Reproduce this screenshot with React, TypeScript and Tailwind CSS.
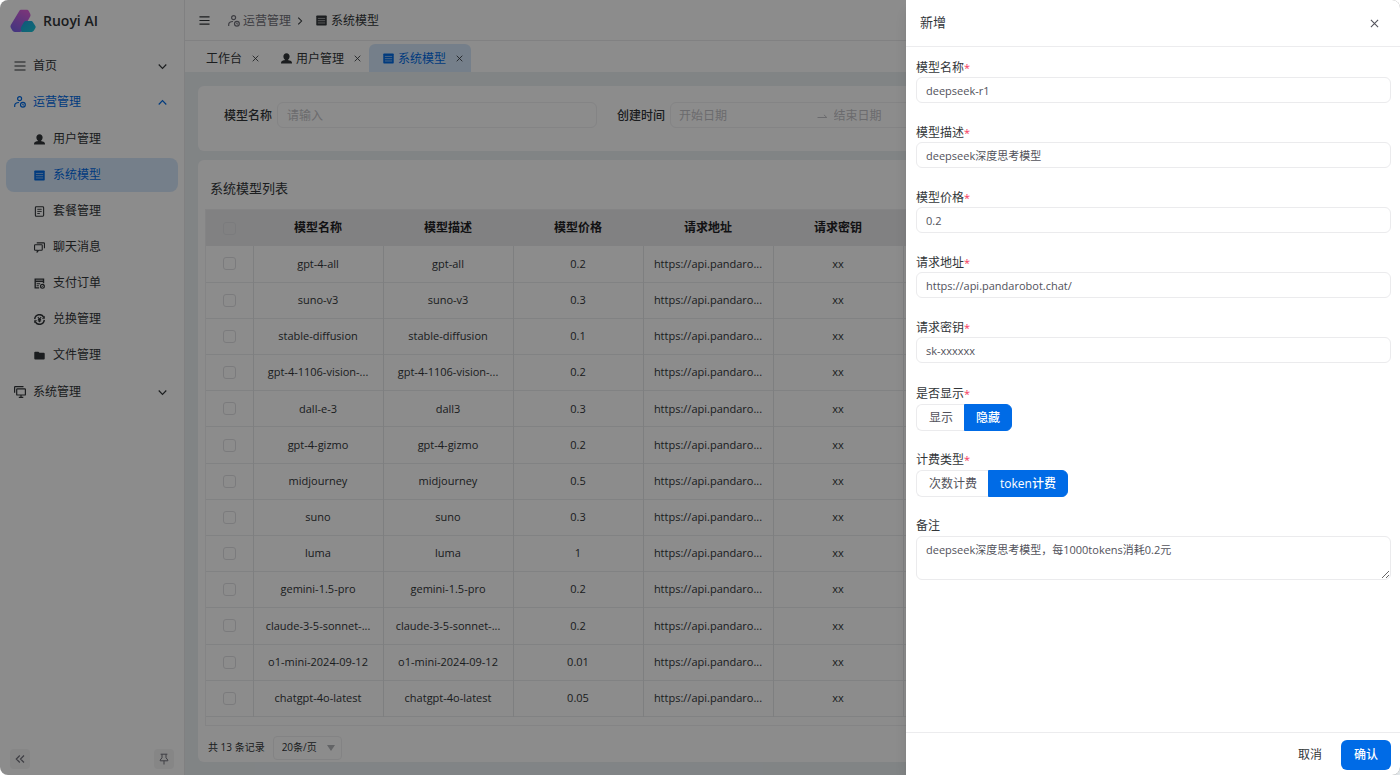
import { SVGProps, ReactNode, useState } from "react";
import clsx from "clsx";

type IconProps = SVGProps<SVGSVGElement>;

interface Model {
  name: string;
  desc: string;
  price: string;
}

const MODELS: Model[] = [
  { name: "gpt-4-all", desc: "gpt-all", price: "0.2" },
  { name: "suno-v3", desc: "suno-v3", price: "0.3" },
  { name: "stable-diffusion", desc: "stable-diffusion", price: "0.1" },
  { name: "gpt-4-1106-vision-...", desc: "gpt-4-1106-vision-...", price: "0.2" },
  { name: "dall-e-3", desc: "dall3", price: "0.3" },
  { name: "gpt-4-gizmo", desc: "gpt-4-gizmo", price: "0.2" },
  { name: "midjourney", desc: "midjourney", price: "0.5" },
  { name: "suno", desc: "suno", price: "0.3" },
  { name: "luma", desc: "luma", price: "1" },
  { name: "gemini-1.5-pro", desc: "gemini-1.5-pro", price: "0.2" },
  { name: "claude-3-5-sonnet-...", desc: "claude-3-5-sonnet-...", price: "0.2" },
  { name: "o1-mini-2024-09-12", desc: "o1-mini-2024-09-12", price: "0.01" },
  { name: "chatgpt-4o-latest", desc: "chatgpt-4o-latest", price: "0.05" },
];

const COLUMNS = ["模型名称", "模型描述", "模型价格", "请求地址", "请求密钥"];

export default function App() {
  return (
    <div className="relative flex h-screen overflow-hidden bg-white font-['Open_Sans','Noto_Sans_CJK_SC',sans-serif] text-xs text-[#323639]">
      <Sidebar />
      <div className="flex min-w-0 flex-1 flex-col border-l border-[#e9eaec]">
        <Header />
        <TabBar />
        <main className="flex min-h-0 flex-1 flex-col gap-[9px] bg-[#ebf0f3] p-[13px] pt-[14px]">
          <SearchForm />
          <ModelTable />
        </main>
      </div>
      {/* mask */}
      <div className="absolute inset-0 rounded-lg bg-black/45" />
      <ModelDrawer />
    </div>
  );
}

/* ---------- sidebar ---------- */

function Sidebar() {
  return (
    <aside className="flex w-[184px] shrink-0 flex-col">
      <div className="flex h-[41px] items-center gap-[7px] pl-[10px]">
        <Logo className="h-6 w-[26px]" />
        <span className="text-sm font-semibold">Ruoyi AI</span>
      </div>
      <nav className="flex flex-1 flex-col gap-[2px] px-[6px] pt-2">
        <MenuItem icon={<MenuIcon className="size-3" />} arrow="down">
          首页
        </MenuItem>
        <MenuItem icon={<UserTimeIcon className="size-3" />} arrow="up" tint>
          运营管理
        </MenuItem>
        <div className="my-px flex flex-col gap-[2px]">
          <SubItem icon={<UserIcon className="size-[11px]" />}>用户管理</SubItem>
          <SubItem icon={<TableIcon className="size-[11px]" />} active>
            系统模型
          </SubItem>
          <SubItem icon={<PackageIcon className="size-[11px]" />}>套餐管理</SubItem>
          <SubItem icon={<ChatIcon className="size-[11px]" />}>聊天消息</SubItem>
          <SubItem icon={<OrderIcon className="size-[11px]" />}>支付订单</SubItem>
          <SubItem icon={<ExchangeIcon className="size-[11px]" />}>兑换管理</SubItem>
          <SubItem icon={<FolderIcon className="size-[11px]" />}>文件管理</SubItem>
        </div>
        <MenuItem icon={<ScreensIcon className="size-3" />} arrow="down">
          系统管理
        </MenuItem>
      </nav>
      <div className="flex justify-between px-[10px] pb-[6px]">
        <button
          aria-label="收起侧边栏"
          className="flex size-5 items-center justify-center rounded-sm bg-[#f4f4f5] text-[#71717a]"
        >
          <DoubleLeftIcon className="size-[10px]" />
        </button>
        <button
          aria-label="固定侧边栏"
          className="flex size-5 items-center justify-center rounded-sm bg-[#f4f4f5] text-[#71717a]"
        >
          <PinIcon className="size-3" />
        </button>
      </div>
    </aside>
  );
}

interface MenuItemProps {
  icon: ReactNode;
  children: ReactNode;
  arrow: "up" | "down";
  tint?: boolean;
}

function MenuItem({ icon, children, arrow, tint }: MenuItemProps) {
  return (
    <button
      className={clsx(
        "flex h-[34px] items-center gap-[7px] rounded-md pr-[11px] pl-2",
        tint && "text-[#006be6]"
      )}
    >
      {icon}
      <span>{children}</span>
      <ChevronIcon className={clsx("ml-auto size-[9px]", arrow === "up" && "rotate-180")} />
    </button>
  );
}

interface SubItemProps {
  icon: ReactNode;
  children: ReactNode;
  active?: boolean;
}

function SubItem({ icon, children, active }: SubItemProps) {
  return (
    <a
      href="#"
      className={clsx(
        "flex h-[34px] items-center gap-2 rounded-lg pl-7",
        active && "bg-[#d6e8fb] text-[#006be6]"
      )}
    >
      {icon}
      <span>{children}</span>
    </a>
  );
}

/* ---------- header ---------- */

function Header() {
  return (
    <header className="flex h-[41px] shrink-0 items-center border-b border-[#ebebed] pt-px pl-[14px]">
      <button aria-label="折叠菜单" className="mr-[18px]">
        <MenuIcon className="size-[11px]" />
      </button>
      <nav className="flex items-center">
        <a href="#" className="flex items-center gap-[3px] text-[#71717a]">
          <UserTimeIcon className="size-3" />
          运营管理
        </a>
        <ChevronIcon className="mr-3 ml-[5px] size-2 -rotate-90" />
        <span className="flex items-center gap-1">
          <TableIcon className="size-[11px]" />
          系统模型
        </span>
      </nav>
    </header>
  );
}

function TabBar() {
  return (
    <div className="flex h-[31px] shrink-0 items-end pl-[7px]">
      <Tab>工作台</Tab>
      <Tab icon={<UserIcon className="size-[11px]" />}>用户管理</Tab>
      <Tab icon={<TableIcon className="size-[11px]" />} active>
        系统模型
      </Tab>
    </div>
  );
}

function Tab({ icon, children, active }: { icon?: ReactNode; children: ReactNode; active?: boolean }) {
  return (
    <div
      className={clsx(
        "flex h-7 items-center gap-1 rounded-t-md pt-px pr-2 pl-[14px]",
        active && "bg-[#d6e8fb]"
      )}
    >
      <a href="#" className={clsx("flex items-center gap-1", active && "text-[#006be6]")}>
        {icon}
        {children}
      </a>
      <button aria-label="关闭标签" className="ml-[6px]">
        <CloseIcon className="size-[7px]" />
      </button>
    </div>
  );
}

/* ---------- content ---------- */

function SearchForm() {
  return (
    <form className="grid shrink-0 grid-cols-3 gap-5 rounded-md bg-white pt-4 pr-1 pb-[23px] pl-[26px]">
      <div className="flex items-center gap-[5px]">
        <label htmlFor="search-name" className="shrink-0 pt-[2px] font-medium">
          模型名称
        </label>
        <input
          id="search-name"
          placeholder="请输入"
          className="h-[26px] min-w-0 flex-1 rounded-md border border-[#f0f0f2] px-[9px] pt-px placeholder:text-[#c4c4c8]"
        />
      </div>
      <div className="flex items-center gap-[5px]">
        <label htmlFor="search-start" className="shrink-0 pt-[2px] font-medium">
          创建时间
        </label>
        <div className="flex h-[26px] min-w-0 flex-1 items-center rounded-md border border-[#f0f0f2] pt-px pr-[25px] pl-2 text-[#c4c4c8]">
          <input
            id="search-start"
            placeholder="开始日期"
            className="min-w-0 flex-1 placeholder:text-[#c4c4c8]"
          />
          <SwapRightIcon className="mx-[6px] size-3 shrink-0" />
          <input
            aria-label="结束日期"
            placeholder="结束日期"
            className="min-w-0 flex-1 placeholder:text-[#c4c4c8]"
          />
        </div>
      </div>
    </form>
  );
}

function ModelTable() {
  return (
    <section className="flex min-h-0 flex-1 flex-col rounded-md bg-white px-[7px]">
      <h2 className="pt-[18px] pb-[11px] pl-[5px] text-[13px] leading-5">系统模型列表</h2>
      <div className="border border-[#f0f1f3] pb-2">
        <table className="h-[507px] w-full table-fixed border-collapse text-center">
          <colgroup>
            <col className="w-[47px]" />
            {COLUMNS.map((col) => (
              <col key={col} className="w-[130px]" />
            ))}
            <col />
          </colgroup>
          <thead className="bg-[#ececed]">
            <tr className="h-9">
              <th>
                <Check label="全选" />
              </th>
              {COLUMNS.map((col) => (
                <th key={col} className="font-bold text-[#1f2225]">
                  {col}
                </th>
              ))}
              <th />
            </tr>
          </thead>
          <tbody className="text-[11px]">
            {MODELS.map((model) => (
              <tr key={model.name} className="h-9 border-b border-[#ebedef]">
                <td className="border-r border-[#e6e8ea]">
                  <Check label={model.name} />
                </td>
                <Cell>{model.name}</Cell>
                <Cell>{model.desc}</Cell>
                <Cell>{model.price}</Cell>
                <Cell>https://api.pandaro...</Cell>
                <Cell>xx</Cell>
                <td />
              </tr>
            ))}
          </tbody>
        </table>
      </div>
      <div className="flex items-center gap-2 pt-[10px] pl-[3px] text-[10px]">
        <span>共 13 条记录</span>
        <div className="relative">
          <select
            aria-label="每页条数"
            className="h-6 w-[69px] appearance-none rounded-sm border border-[#efeff1] pl-2"
          >
            <option>20条/页</option>
          </select>
          <svg
            viewBox="0 0 8 6"
            className="pointer-events-none absolute top-[9px] right-[7px] h-[6px] w-2 fill-[#b4b6ba]"
          >
            <path d="M0 0h8L4 6z" />
          </svg>
        </div>
      </div>
    </section>
  );
}

function Cell({ children }: { children: ReactNode }) {
  return <td className="border-r border-[#e6e8ea] px-1 whitespace-nowrap">{children}</td>;
}

function Check({ label }: { label: string }) {
  return (
    <input
      type="checkbox"
      aria-label={label}
      className="mx-auto block size-[13px] appearance-none rounded-[3px] border border-[#e0e1e4]"
    />
  );
}

/* ---------- drawer ---------- */

function ModelDrawer() {
  const [visible, setVisible] = useState("隐藏");
  const [billing, setBilling] = useState("token计费");

  return (
    <div
      role="dialog"
      aria-label="新增"
      className="absolute inset-y-0 right-0 flex w-[494px] flex-col rounded-r-lg bg-white shadow-lg"
    >
      <div className="flex h-[47px] shrink-0 items-center justify-between border-b border-[#ececee] pr-[21px] pl-[14px]">
        <h2 className="text-[13px]">新增</h2>
        <button aria-label="关闭" className="text-[#52525b]">
          <CloseIcon className="size-[9px]" />
        </button>
      </div>
      <form className="min-h-0 flex-1 overflow-hidden pt-3 pr-[9px] pl-[10px]">
        <TextField id="name" label="模型名称" value="deepseek-r1" />
        <TextField id="desc" label="模型描述" value="deepseek深度思考模型" />
        <TextField id="price" label="模型价格" value="0.2" />
        <TextField id="url" label="请求地址" value="https://api.pandarobot.chat/" />
        <TextField id="key" label="请求密钥" value="sk-xxxxxx" />
        <RadioField
          name="visible"
          label="是否显示"
          options={["显示", "隐藏"]}
          value={visible}
          onSelect={setVisible}
        />
        <RadioField
          name="billing"
          label="计费类型"
          options={["次数计费", "token计费"]}
          value={billing}
          onSelect={setBilling}
        />
        <label htmlFor="remark" className="block leading-5">
          备注
        </label>
        <textarea
          id="remark"
          defaultValue="deepseek深度思考模型，每1000tokens消耗0.2元"
          className="block h-11 w-full resize-y rounded-md border border-[#ebebed] px-[9px] py-1 text-[11px] leading-[18px] text-[#52525b]"
        />
      </form>
      <div className="flex h-[43px] shrink-0 items-center justify-end gap-[7px] border-t border-[#ececee] pt-px pr-[9px]">
        <button className="h-[30px] px-3">取消</button>
        <button className="h-[30px] rounded-md bg-[#006be6] px-[13px] font-medium text-white">
          确认
        </button>
      </div>
    </div>
  );
}

function Required() {
  return <span className="text-[11px] text-[#f5365c]">*</span>;
}

function TextField({ id, label, value }: { id: string; label: string; value: string }) {
  return (
    <div className="mb-[21px]">
      <label htmlFor={id} className="block leading-[18px]">
        {label}
        <Required />
      </label>
      <input
        id={id}
        defaultValue={value}
        className="block h-[26px] w-full rounded-md border border-[#ebebed] px-[9px] text-[11px] text-[#52525b]"
      />
    </div>
  );
}

interface RadioFieldProps {
  name: string;
  label: string;
  options: string[];
  value: string;
  onSelect: (value: string) => void;
}

function RadioField({ name, label, options, value, onSelect }: RadioFieldProps) {
  return (
    <fieldset className="mb-[19px]">
      <legend className="block leading-5">
        {label}
        <Required />
      </legend>
      <div className="flex">
        {options.map((option) => (
          <label
            key={option}
            className={clsx(
              "relative flex h-[27px] items-center border px-[11px] first:rounded-l-md first:border-r-0 first:pl-3 last:rounded-r-md",
              option === value
                ? "border-[#006be6] bg-[#006be6] font-medium text-white"
                : "border-[#ebebed] text-[#52525b]"
            )}
          >
            <input
              type="radio"
              name={name}
              checked={option === value}
              onChange={() => onSelect(option)}
              className="sr-only"
            />
            {option}
          </label>
        ))}
      </div>
    </fieldset>
  );
}

/* ---------- icons ---------- */

function Logo(props: IconProps) {
  return (
    <svg viewBox="0 0 26 24" {...props}>
      <defs>
        <linearGradient id="logo-a" x1="0.7" y1="0" x2="0.2" y2="1">
          <stop offset="0" stopColor="#dd62dd" />
          <stop offset="1" stopColor="#7a62e8" />
        </linearGradient>
        <linearGradient id="logo-b" x1="0" y1="0" x2="1" y2="1">
          <stop offset="0" stopColor="#1f9fe0" />
          <stop offset="1" stopColor="#1cc8d6" />
        </linearGradient>
      </defs>
      <path
        d="M11.500.8h5c1 0 1.900.5 2.400 1.400l1.300 2.500c.5.900.5 1.900 0 2.800L12.500 21.300c-.5 1-1.400 1.600-2.500 1.600H4.800c-1 0-1.900-.5-2.400-1.400l-1.600-2.700c-.5-.9-.5-1.900 0-2.800L9.100 2.200C9.600 1.300 10.500.8 11.500.8z"
        fill="url(#logo-a)"
      />
      <path
        d="M15.800 12h4.900c1 0 1.900.5 2.400 1.400l2.300 3.500c.4.700.4 1.500 0 2.200l-1.500 2.500c-.5.900-1.300 1.300-2.200 1.300H10.500c1.100 0 1.300-.6.900-1.300l-.4-1c-.4-.9-.4-1.600 0-2.400l2.700-4.600c.5-1 1.100-1.600 2.100-1.600z"
        fill="url(#logo-b)"
      />
    </svg>
  );
}

function MenuIcon(props: IconProps) {
  return (
    <svg viewBox="0 0 12 12" fill="none" stroke="currentColor" strokeWidth="1.200" {...props}>
      <path d="M.5 2h11M.5 6h11M.5 10h11" />
    </svg>
  );
}

function UserTimeIcon(props: IconProps) {
  return (
    <svg viewBox="0 0 12 12" fill="none" stroke="currentColor" strokeWidth="1.200" {...props}>
      <circle cx="5.600" cy="2.700" r="2" />
      <path d="M.7 11V9.600C.7 7.700 2.100 6.500 5 6.500" />
      <circle cx="8.900" cy="8.800" r="2.400" />
      <path d="M8.800 7.600v1.400h1.200" strokeWidth=".9" />
    </svg>
  );
}

function UserIcon(props: IconProps) {
  return (
    <svg viewBox="0 0 12 12" fill="currentColor" {...props}>
      <path d="M6 .2c2.100 0 3.400 1.500 3.400 3.400 0 1.500-.6 2.900-1.600 3.600v.5c0 .4 3.700.7 4 2.100.1.500.2 1.200.2 1.700H0c0-.5.100-1.200.2-1.700.3-1.400 4-1.700 4-2.100v-.5C3.200 6.500 2.600 5.100 2.600 3.600 2.600 1.700 3.900.2 6 .2z" />
    </svg>
  );
}

function TableIcon(props: IconProps) {
  return (
    <svg viewBox="0 0 12 12" {...props}>
      <rect x=".3" y=".5" width="11.400" height="11" rx=".8" fill="currentColor" />
      <path d="M2 3.700h8M2 6.200h8M2 8.700h8" stroke="#fff" strokeWidth=".8" strokeOpacity=".75" />
    </svg>
  );
}

function PackageIcon(props: IconProps) {
  return (
    <svg viewBox="0 0 12 12" fill="none" stroke="currentColor" strokeWidth="1.200" {...props}>
      <rect x="1.500" y=".8" width="9" height="10.400" rx="1" />
      <path d="M3.600 3.600h4.800M3.600 5.900h4.800M3.600 8.200h2.800" strokeWidth="1" />
    </svg>
  );
}

function ChatIcon(props: IconProps) {
  return (
    <svg viewBox="0 0 12 12" fill="none" stroke="currentColor" strokeWidth="1.200" {...props}>
      <path d="M1.300 3h7c.4 0 .7.300.7.700v4.600c0 .4-.3.700-.7.700H5.200l-1.700 1.900V9H1.300c-.4 0-.7-.3-.7-.7V3.700c0-.4.300-.7.700-.7z" />
      <path d="M3 .9h7.600c.4 0 .8.300.8.800v5" />
    </svg>
  );
}

function OrderIcon(props: IconProps) {
  return (
    <svg viewBox="0 0 12 12" fill="none" stroke="currentColor" {...props}>
      <path d="M10.400 5.600V1.200H1.300v9.600h4.300" strokeWidth="1.500" />
      <path d="M1.300 3.600h9.100" strokeWidth="1.700" />
      <path d="M2.800 6.200h4M2.800 8.500h2.500" strokeWidth="1.100" />
      <circle cx="9.200" cy="9.100" r="2.100" strokeWidth="1.300" />
      <path d="M8 10.300l2.400-2.400" />
    </svg>
  );
}

function ExchangeIcon(props: IconProps) {
  return (
    <svg viewBox="0 0 12 12" fill="none" stroke="currentColor" {...props}>
      <path d="M.8 5.600A5.200 5.200 0 0 1 10.500 3.400M11.200 6.400A5.200 5.200 0 0 1 1.500 8.600" strokeWidth="1.600" />
      <path d="M11.800 2v3.300H8.500zM.2 10V6.700h3.300z" fill="currentColor" stroke="none" />
      <path d="M4.200 3.400L6 5.600l1.800-2.200M6 5.600v3.300M4.200 6h3.600M4.200 7.500h3.600" strokeWidth="1.100" />
    </svg>
  );
}

function FolderIcon(props: IconProps) {
  return (
    <svg viewBox="0 0 12 12" fill="currentColor" {...props}>
      <path d="M1.300 1.800h3.500l1.200 1.200h4.700c.6 0 1 .4 1 1v5.300c0 .6-.4 1-1 1H1.300c-.6 0-1-.4-1-1V2.800c0-.6.4-1 1-1z" />
    </svg>
  );
}

function ScreensIcon(props: IconProps) {
  return (
    <svg viewBox="0 0 12 12" fill="none" stroke="currentColor" strokeWidth="1.200" {...props}>
      <path d="M.6 6.800V1.200c0-.4.200-.6.600-.6h8.300" />
      <rect x="2.700" y="2.900" width="8.700" height="6.100" rx=".6" />
      <path d="M7 9v2M4.800 11.300h4.500" />
    </svg>
  );
}

function ChevronIcon(props: IconProps) {
  return (
    <svg viewBox="0 0 10 10" fill="none" stroke="currentColor" strokeWidth="1.300" {...props}>
      <path d="M.8 2.800L5 7l4.200-4.200" />
    </svg>
  );
}

function CloseIcon(props: IconProps) {
  return (
    <svg viewBox="0 0 10 10" fill="none" stroke="currentColor" strokeWidth="1.200" {...props}>
      <path d="M1 1l8 8M9 1L1 9" />
    </svg>
  );
}

function DoubleLeftIcon(props: IconProps) {
  return (
    <svg viewBox="0 0 10 10" fill="none" stroke="currentColor" strokeWidth="1.200" {...props}>
      <path d="M4.800 1.500L1.300 5l3.500 3.500M9 1.500L5.500 5 9 8.500" />
    </svg>
  );
}

function PinIcon(props: IconProps) {
  return (
    <svg viewBox="0 0 12 12" fill="none" stroke="currentColor" strokeWidth="1" {...props}>
      <path d="M2.600 1.200h6.800M4 1.200v3.600L2.200 7v.8h7.600V7L8 4.800V1.200M6 7.800v3.700" />
    </svg>
  );
}

function SwapRightIcon(props: IconProps) {
  return (
    <svg viewBox="0 0 12 12" fill="none" stroke="currentColor" strokeWidth="1" {...props}>
      <path d="M1.500 7.500h9.300L7.900 4.800" />
    </svg>
  );
}
